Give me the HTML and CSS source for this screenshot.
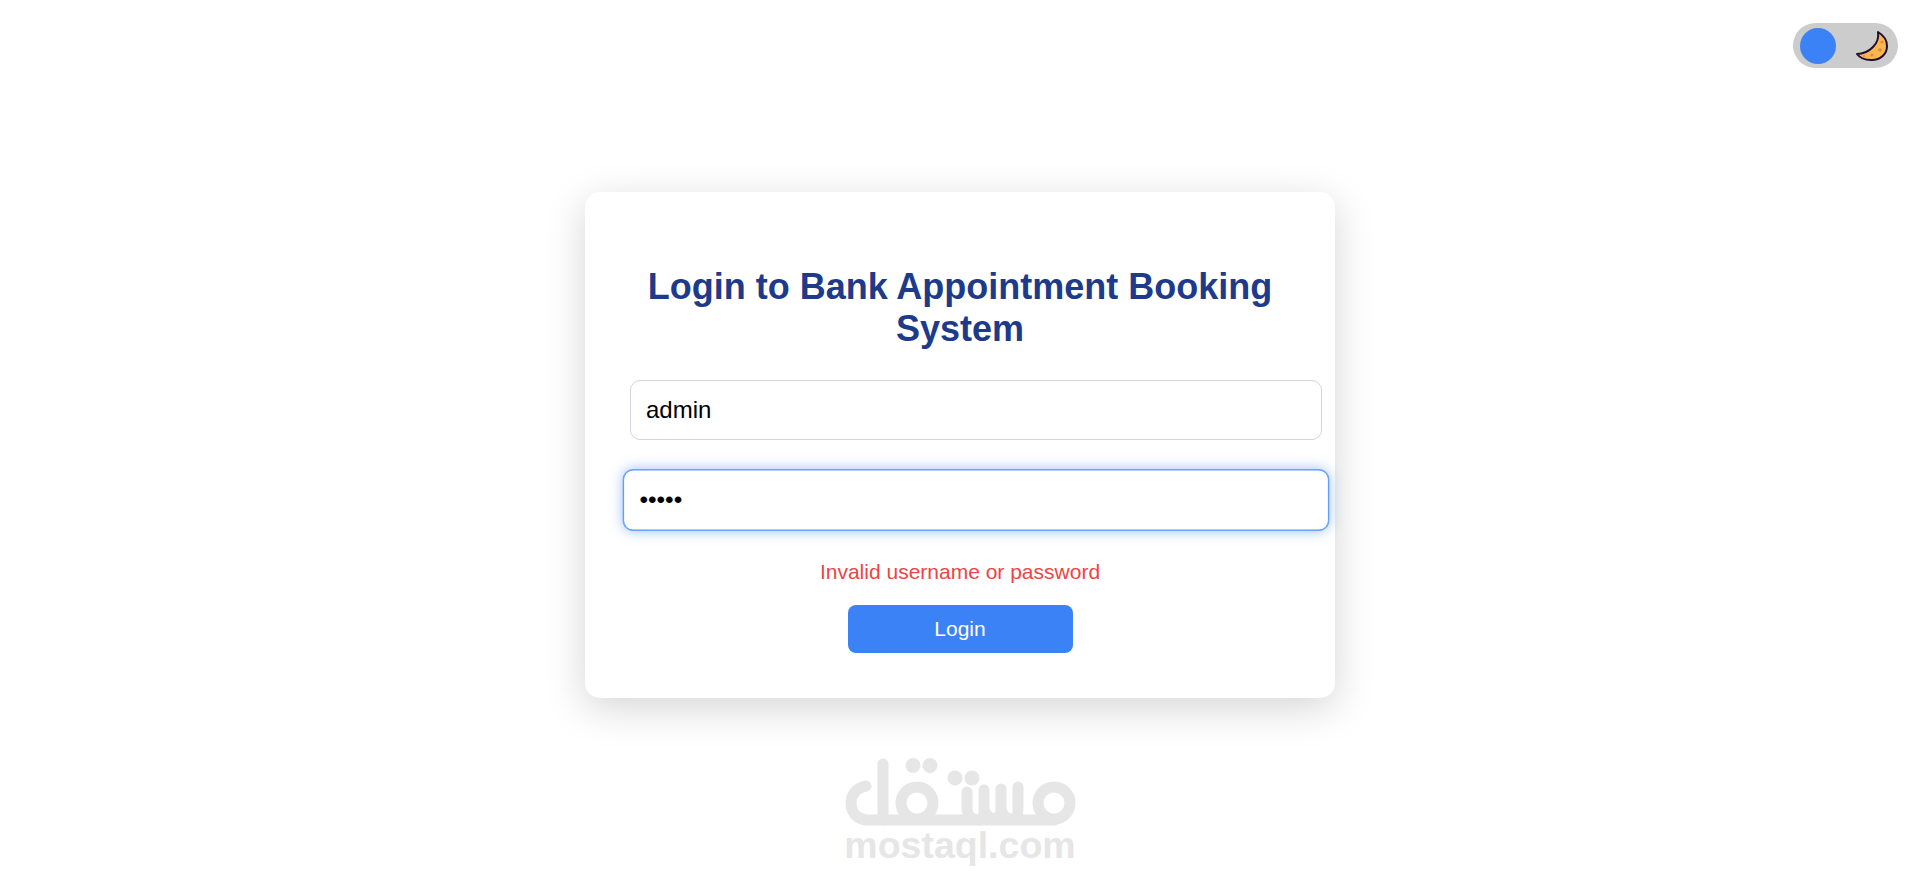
FILE: index.html
```html
<!DOCTYPE html>
<html lang="en">
<head>
<meta charset="UTF-8">
<meta name="viewport" content="width=device-width, initial-scale=1.0">
<title>Login to Bank Appointment Booking System</title>
<link rel="stylesheet" href="styles.css">
</head>
<body>
<div class="theme-toggle">
    <span class="toggle-knob"></span>
    <svg class="toggle-moon" viewBox="0 0 36 34" width="36" height="34">
        <path d="M24 3C25 9 23 14 19 18C15 22 9 25 3 25C6 29 12 31.500 19 31C27 30.500 33 25 33 17C33 11 29 6 24 3Z" fill="#fbb650" stroke="#1d1030" stroke-width="2" stroke-linejoin="round"/>
        <circle cx="28" cy="13" r="1.6" fill="#d98e3a"/>
        <circle cx="26" cy="21" r="1.8" fill="#d98e3a"/>
        <circle cx="18" cy="26" r="1.6" fill="#d98e3a"/>
        <circle cx="10" cy="27" r="1" fill="#d98e3a"/>
    </svg>
</div>

<div class="container">
    <h2>Login to Bank Appointment Booking System</h2>
    <form id="loginForm">
        <input type="text" id="username" name="username" value="admin">
        <input class="focused" type="password" id="password" name="password" value="admin">
        <div class="error">Invalid username or password</div>
        <button class="login-btn" type="submit">Login</button>
    </form>
</div>

<div class="watermark">
    <svg class="watermark-logo" viewBox="0 0 232 70" width="232" height="70" role="img" aria-label="Mostaql logo">
        <g fill="none" stroke="#e6e6e6" stroke-width="11" stroke-linecap="round" stroke-linejoin="round">
            <path d="M22 28C12 30 7 37 7 45C7 55 14 62 24 62H210"/>
            <path d="M39 6V62"/>
            <circle cx="73" cy="45" r="16"/>
            <circle cx="210" cy="45" r="16"/>
            <path d="M123 34V50C123 58 129 62 135 62C141 62 140 56 140 50V32V50C140 56 147 62 152 60C157 58 157 54 157 50V31V50C157 56 163 62 169 61C174 60 174 54 174 50V29"/>
        </g>
        <g fill="#e6e6e6">
            <circle cx="69" cy="7.500" r="7.500"/>
            <circle cx="86" cy="7.500" r="7.500"/>
            <circle cx="111" cy="20" r="7.500"/>
            <circle cx="128" cy="20" r="7.500"/>
        </g>
    </svg>
    <div class="watermark-text">mostaql.com</div>
</div>
</body>
</html>
```

FILE: styles.css
```css
body {
    font-family: "Liberation Sans", Arial, sans-serif;
    margin: 0;
    padding: 192px 0 0;
    height: 883px;
    box-sizing: border-box;
    display: flex;
    justify-content: center;
    align-items: flex-start;
    background-color: #fff;
    overflow: hidden;
}

.theme-toggle {
    position: absolute;
    top: 23px;
    right: 22px;
    width: 105px;
    height: 45px;
    box-sizing: border-box;
    padding: 0 8px 0 7px;
    display: flex;
    align-items: center;
    justify-content: space-between;
    background-color: #ccc;
    border-radius: 23px;
}

.toggle-knob {
    width: 36px;
    height: 36px;
    background-color: #3b82f6;
    border-radius: 50%;
}

.container {
    width: 750px;
    height: 506px;
    box-sizing: border-box;
    padding: 45px;
    background-color: #fff;
    border-radius: 15px;
    box-shadow: 0 10px 40px rgba(0, 0, 0, 0.17);
}

h2 {
    margin: 29px 0 30px;
    color: #1e3a8a;
    font-size: 36px;
    text-align: center;
}

input[type="text"],
input[type="password"] {
    display: block;
    width: 100%;
    padding: 15px;
    margin-bottom: 30px;
    border: 1px solid #d1d5db;
    border-radius: 10px;
    font-family: inherit;
    font-size: 24px;
    color: #000;
    outline: none;
}

input.focused {
    border-color: #5b9bfa;
    box-shadow: 0 0 0 0.5px #7fb0fb, 0 0 12px rgba(59, 130, 246, 0.5);
    transform: scale(1.02);
}

.error {
    margin-bottom: 21px;
    color: #ef4444;
    font-size: 21px;
    text-align: center;
}

.login-btn {
    display: block;
    width: 225px;
    height: 48px;
    margin: 0 auto;
    background-color: #3b82f6;
    color: #fff;
    border: none;
    border-radius: 8px;
    font-family: inherit;
    font-size: 21px;
}

.watermark {
    position: absolute;
    left: 844px;
    top: 758px;
    width: 232px;
    text-align: center;
}

.watermark-logo {
    display: block;
}

.watermark-text {
    margin-top: -1px;
    color: #e6e6e6;
    font-size: 37.5px;
    font-weight: bold;
    line-height: 36px;
}
```
